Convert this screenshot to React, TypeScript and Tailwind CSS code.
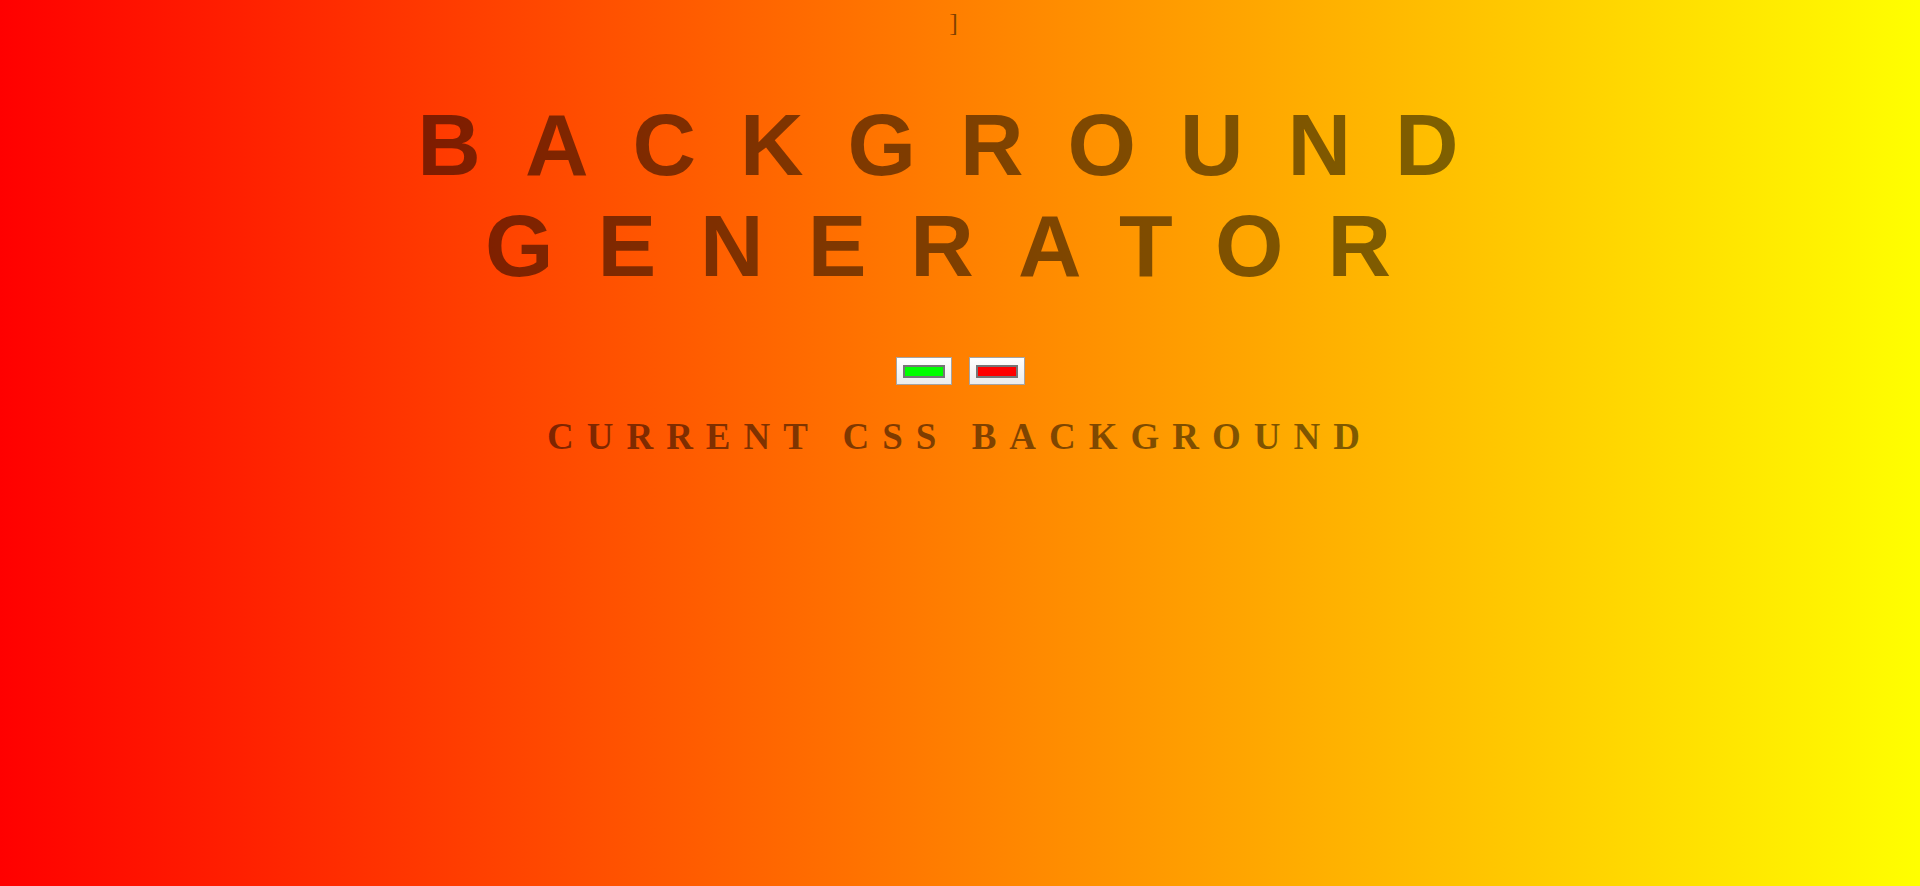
import { useState } from "react";

function ColorSwatch({ color }: { color: string }) {
  return (
    <div className="w-[56px] h-[28px] border border-[#a4a4a4] bg-gradient-to-b from-[#ffffff] to-[#ececec] flex items-center justify-center">
      <div className="w-[42px] h-[13px] border-2 border-[#767676]" style={{ backgroundColor: color }} />
    </div>
  );
}

export default function App() {
  const [colors] = useState(["#00ff00", "#ff0000"]);

  return (
    <div className="min-h-screen w-full bg-[linear-gradient(to_right,#ff0000,#ffff00)] text-center text-black/50 pt-[8px] uppercase">
      <div className="font-['Liberation_Serif',serif] text-[26px] leading-[30px] tracking-[0.5em]">]</div>

      <h1 className="mt-[56px] font-['Liberation_Sans',Arial,sans-serif] font-bold text-[88px] leading-[101px] tracking-[0.5em]">
        Background Generator
      </h1>

      <div className="mt-[61px] flex justify-center gap-[17px]">
        {colors.map((c) => (
          <ColorSwatch key={c} color={c} />
        ))}
      </div>

      <h3 className="mt-[31px] font-['Liberation_Serif',serif] font-bold text-[37px] leading-[42.5px] tracking-[13px]">
        Current CSS Background
      </h3>
    </div>
  );
}
